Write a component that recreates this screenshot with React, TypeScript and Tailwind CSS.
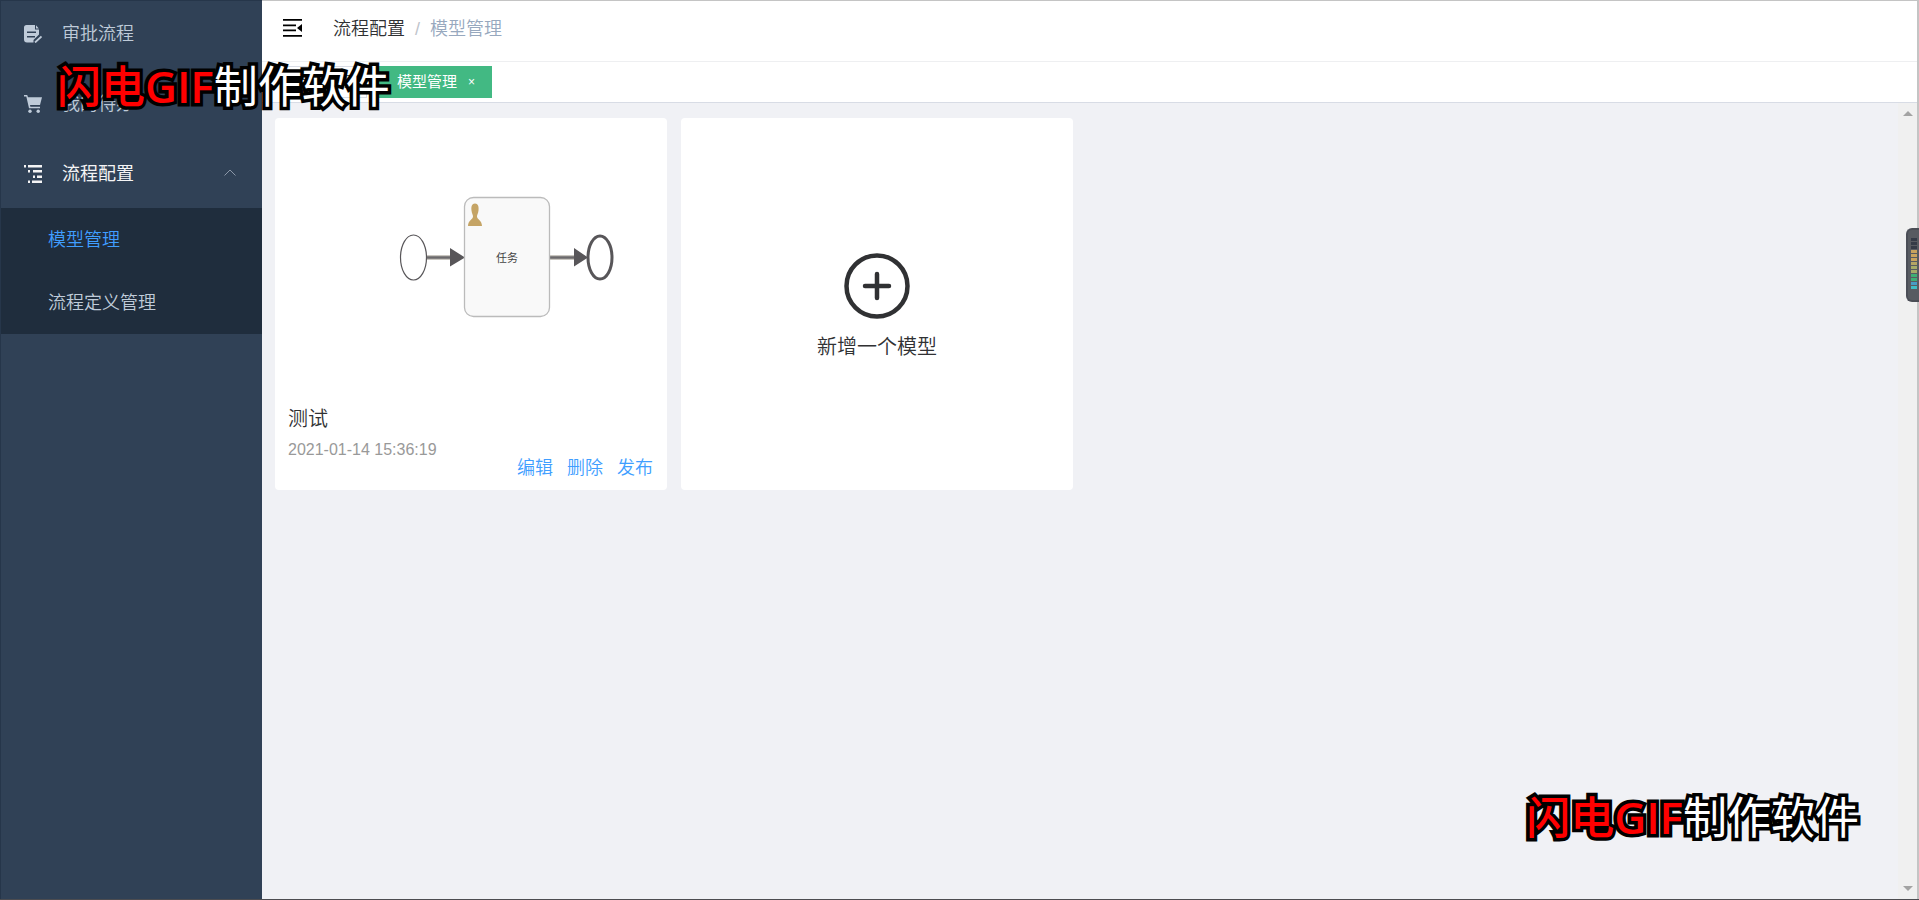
import type { ReactNode } from "react";

function ApprovalIcon() {
  return (
    <svg viewBox="0 0 18 18" className="size-[18px]" aria-hidden="true">
      <path d="M2.500 0H11v4.500h4V9.500L9.500 15v2.500H3q-3 0-3-3V2.500Q0 0 2.500 0z" fill="currentColor" />
      <path d="M12 0.300L14.800 3.400H12z" fill="currentColor" />
      <path d="M3 7.200h9M3 11.700h8" stroke="#304156" strokeWidth="1.400" />
      <path d="M11 17.500l6.500-6" stroke="currentColor" strokeWidth="1.800" />
    </svg>
  );
}

function CartIcon() {
  return (
    <svg viewBox="0 0 18 18" className="size-[18px]" fill="currentColor" aria-hidden="true">
      <path d="M0 0h3.200l.8 2.200H18L16 10H6l.4 1.800H16v1.400H5L2.300 1.400H0z" />
      <circle cx="6" cy="16.200" r="1.700" />
      <circle cx="14.200" cy="16.200" r="1.700" />
    </svg>
  );
}

function TreeIcon() {
  return (
    <svg viewBox="0 0 18 18" className="size-[18px]" fill="currentColor" aria-hidden="true">
      <path d="M0 0h2v2.500H0zM4 0h14v2.500H4zM4 5h2v2.500H4zM9 5h9v2.500H9zM9 10.500h2V13H9zM13 10.500h5V13h-5zM4 15.500h2V18H4zM8 15.500h10V18H8z" />
    </svg>
  );
}

function MenuItem({ icon, label, open }: { icon: ReactNode; label: string; open?: boolean }) {
  return (
    <a
      href="#"
      className={`flex h-[70px] items-center gap-5 pl-[23px] pr-6 pt-0.5 text-lg ${open ? "font-normal text-[#f4f4f5]" : "text-[#bfcbd9]"}`}
    >
      {icon}
      <span>{label}</span>
      {open && (
        <svg viewBox="0 0 12 7" className="mb-1 ml-auto mr-0.5 w-3" fill="none" stroke="#8b97a8" aria-hidden="true">
          <path d="M.5 6.500L6 1l5.500 5.500" />
        </svg>
      )}
    </a>
  );
}

function Watermark({ className }: { className: string }) {
  return (
    <div
      className={`pointer-events-none absolute z-20 whitespace-nowrap font-['Open_Sans','Noto_Sans_CJK_SC',sans-serif] text-[44px] font-normal leading-none text-white [-webkit-text-stroke:7px_black] [paint-order:stroke_fill] ${className}`}
    >
      <span className="font-medium text-[#ff0000]">
        闪电<span className="font-semibold">GIF</span>
      </span>
      <span>制作软件</span>
    </div>
  );
}

function ProcessDiagram() {
  return (
    <svg viewBox="0 1 392 280" className="w-full" role="img" aria-label="任务">
      <g fill="none" stroke="#585659">
        <ellipse cx="138.500" cy="140.500" rx="13" ry="22.500" strokeWidth="1.200" />
        <ellipse cx="325" cy="140.500" rx="12" ry="21.500" strokeWidth="3" />
      </g>
      <path d="M152 140.500h26M274 140.500h26" stroke="#c9c6c0" strokeWidth="5" />
      <path d="M152 140.500h26M274 140.500h26" stroke="#6b696b" strokeWidth="2.500" />
      <path d="M175 131l15 9.500-15 9zM299 131l14 9.500-14 9z" fill="#585659" />
      <rect x="189.500" y="80.500" width="85" height="119" rx="9" fill="#f9f9f9" stroke="#bbb" strokeWidth="1.300" />
      <path d="M200 86.500c-3 0-4 3-3.500 7 .3 3 1.500 4 1.500 6 0 3-5 4-5 9.500h14c0-5.500-5-6.500-5-9.500 0-2 1.200-3 1.500-6 .5-4-.5-7-3.500-7z" fill="#c5a465" />
      <text x="232" y="145" textAnchor="middle" fontSize="11" fontWeight="400" fill="#444" fontFamily="'Noto Sans CJK SC', sans-serif">
        任务
      </text>
    </svg>
  );
}

const METER = [
  "bg-[#353b47]", "bg-[#353b47]", "bg-[#353b47]", "bg-[#c9a35e]", "bg-[#c9a35e]", "bg-[#c9a35e]",
  "bg-[#b5a565]", "bg-[#a6ab68]", "bg-[#a6ab68]", "bg-[#3fae74]", "bg-[#3fae74]", "bg-[#479cc4]", "bg-[#3fbcc4]",
];

export default function App() {
  return (
    <div className="relative flex min-h-screen overflow-hidden border-b border-[#4c4c50] bg-[#f0f1f5] font-['Liberation_Sans','Noto_Sans_CJK_SC',sans-serif] font-[350] text-[#303133]">
      <nav className="w-[262px] shrink-0 overflow-hidden border-l border-t border-[#26364a] bg-[#304156]">
        <div className="-mt-[3px]">
          <MenuItem icon={<ApprovalIcon />} label="审批流程" />
          <MenuItem icon={<CartIcon />} label="我的待办" />
          <MenuItem icon={<TreeIcon />} label="流程配置" open />
          <div className="bg-[#1f2d3d] text-lg">
            <a href="#" className="flex h-[63px] items-center pl-[47px] text-[#409eff]">模型管理</a>
            <a href="#" className="flex h-[63px] items-center pl-[47px] text-[#bfcbd9]">流程定义管理</a>
          </div>
        </div>
      </nav>

      <div className="flex min-w-0 flex-1 flex-col border-r-2 border-t border-[#c4c4c4]">
        <header className="flex h-[61px] items-center border-b border-[#eeeff1] bg-white pb-1.5 pl-5">
          <button type="button" aria-label="收起菜单" className="text-black">
            <svg viewBox="0 0 21 18" className="w-[21px]" fill="currentColor" aria-hidden="true">
              <path d="M1 0h19v1.700H1zM1 5.500h13v1.700H1zM1 10.500h13v1.700H1zM1 16h19v1.700H1zM20 5v8l-5-4z" />
            </svg>
          </button>
          <div className="ml-[30px] flex gap-2.5 pt-0.5 text-lg">
            <a href="#">流程配置</a>
            <span className="text-[#c0c4cc]">/</span>
            <span className="text-[#97a8be]">模型管理</span>
          </div>
        </header>

        <div className="flex h-[41px] items-center gap-1.5 border-b border-[#d8dce5] bg-white pl-[19px] text-[15px] font-normal">
          <a href="#" className="flex h-8 items-center border border-[#d8dce5] px-3 text-[#495060]">审批流程</a>
          <a href="#" className="flex h-8 items-center gap-1 bg-[#42b983] pl-6 pr-2.5 text-white">
            模型管理
            <span className="px-[7px] text-xs">×</span>
          </a>
        </div>

        <div className="flex flex-1">
          <main className="flex flex-1 flex-wrap content-start gap-3.5 px-[13px] pt-[15px]">
            <article className="flex h-[372px] w-[392px] flex-col rounded bg-white">
              <ProcessDiagram />
              <div className="flex flex-1 flex-col pl-[13px] pr-3.5">
                <h2 className="text-xl leading-[42px]">测试</h2>
                <time className="text-base leading-5 text-[#999]">2021-01-14 15:36:19</time>
                <div className="flex justify-end gap-3.5 text-lg leading-4 text-[#409eff]">
                  <button type="button">编辑</button>
                  <button type="button">删除</button>
                  <button type="button">发布</button>
                </div>
              </div>
            </article>
            <button type="button" className="flex h-[372px] w-[392px] flex-col items-center justify-center gap-3.5 rounded bg-white pt-1.5">
              <svg viewBox="0 0 66 66" className="size-[66px]" fill="none" stroke="#303133" strokeWidth="4.500" strokeLinecap="round" aria-hidden="true">
                <circle cx="33" cy="33" r="30.500" />
                <path d="M33 21v24M21 33h24" />
              </svg>
              <span className="text-xl">新增一个模型</span>
            </button>
          </main>
          <div className="flex w-[19px] flex-col items-center justify-between bg-[#f0f0f0] py-2" aria-hidden="true">
            <svg viewBox="0 0 10 5" className="w-2.5 fill-[#a3a3a3]"><path d="M5 0l5 5H0z" /></svg>
            <svg viewBox="0 0 10 5" className="w-2.5 fill-[#a3a3a3]"><path d="M0 0h10L5 5z" /></svg>
          </div>
        </div>
      </div>

      <div className="absolute right-0 top-[228px] flex h-[74px] w-[13px] justify-end rounded-l-md border-2 border-r-0 border-[#4b4e56] bg-[#585b61] pr-0.5 pt-2" aria-hidden="true">
        <div className="flex w-1.5 flex-col gap-px">
          {METER.map((color, i) => (
            <div key={i} className={`h-[3px] ${color}`} />
          ))}
        </div>
      </div>

      <Watermark className="left-[57px] top-[64px]" />
      <Watermark className="right-[60px] bottom-[60px]" />
    </div>
  );
}
